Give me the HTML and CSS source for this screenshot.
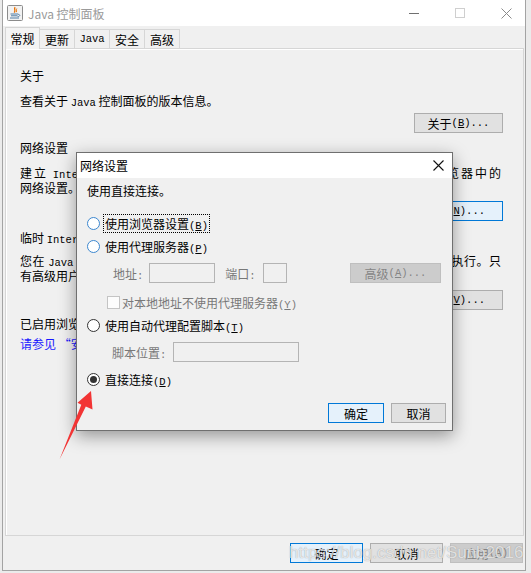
FILE: index.html
```html
<!DOCTYPE html>
<html>
<head>
<meta charset="utf-8">
<title>Java 控制面板</title>
<link rel="stylesheet" href="styles.css">
</head>
<body>
<div class="window">
  <div class="titlebar">
    <svg class="appicon" viewBox="0 0 16 16" width="16" height="16">
      <rect x="0.5" y="0.5" width="15" height="15" rx="1" fill="#f2f2f2" stroke="#8c8c8c"/>
      <path d="M8.2 2.2 C6.2 4 9.4 5 7.2 7.6" stroke="#e76f00" stroke-width="1.3" fill="none"/>
      <path d="M9.8 3.6 C8.8 5 10.3 5.6 9.2 7.2" stroke="#e76f00" stroke-width="1" fill="none"/>
      <path d="M3.5 9 H11 M4 10.8 H10.5 M3 13 H12" stroke="#4f7da6" stroke-width="1" fill="none"/>
      <path d="M11 9.3 C13.4 9.3 13.4 11.6 10.6 11.6" stroke="#4f7da6" stroke-width="1" fill="none"/>
    </svg>
    <span class="title">Java 控制面板</span>
    <div class="winctl">
      <span class="ctl"><span class="min"></span></span>
      <span class="ctl"><span class="max"></span></span>
      <span class="ctl">
        <svg width="11" height="11" viewBox="0 0 11 11"><path d="M0.5 0.5 L10.5 10.5 M10.5 0.5 L0.5 10.5" stroke="#8a8a8a" stroke-width="1"/></svg>
      </span>
    </div>
  </div>

  <div class="tabs">
    <div class="tab active">常规</div>
    <div class="tab">更新</div>
    <div class="tab"><span class="m">Java</span></div>
    <div class="tab">安全</div>
    <div class="tab">高级</div>
  </div>

  <div class="panel">
    <div class="h">关于</div>
    <div class="p gap10">查看关于 <span class="m">Java</span> 控制面板的版本信息。</div>
    <div class="btnrow gap5"><button class="btn about">关于<span class="m">(<u>B</u>)...</span></button></div>

    <div class="h gap7">网络设置</div>
    <div class="p gap10">
      <span class="jl">建立 <span class="m">Internet</span> 连接时使用网络设置。默认情况下，<span class="m">Java</span> 将使用 <span class="m">Web</span> 浏览器中的</span>
      <span class="ln">网络设置。只有高级用户才应修改这些设置。</span>
    </div>
    <div class="btnrow gap6"><button class="btn wide focus">网络设置<span class="m">(<u>N</u>)...</span></button></div>

    <div class="h gap9">临时 <span class="m">Internet</span> 文件</div>
    <div class="p gap8">
      <span class="jl">您在 <span class="m">Java</span> 应用程序中使用的文件会储存在一个特殊的文件夹中，以便以后快速执行。只</span>
      <span class="ln">有高级用户才应删除文件或修改这些设置。</span>
    </div>
    <div class="btnrow gap7">
      <button class="btn wide">设置<span class="m">(<u>S</u>)...</span></button>
      <button class="btn wide">查看<span class="m">(<u>V</u>)...</span></button>
    </div>

    <div class="p gap6">已启用浏览器中的 <span class="m">Java</span> 内容。</div>
    <div class="p link gap5">请参见 “安全” 选项卡</div>
  </div>

  <div class="footer">
    <button class="btn fbtn focus">确定</button>
    <button class="btn fbtn">取消</button>
    <button class="btn fbtn disabled">应用<span class="m">(<u>A</u>)</span></button>
  </div>
</div>

<div class="dialog">
  <div class="dlg-title">
    <span>网络设置</span>
    <span class="dlg-close">
      <svg width="11" height="11" viewBox="0 0 11 11"><path d="M0.5 0.5 L10.5 10.5 M10.5 0.5 L0.5 10.5" stroke="#111" stroke-width="1.1"/></svg>
    </span>
  </div>
  <div class="dlg-body">
    <div class="status">使用直接连接。</div>

    <div class="opt r1"><span class="radio hot"></span><span class="lbl focusring">使用浏览器设置<span class="m">(<u>B</u>)</span></span></div>
    <div class="opt r2"><span class="radio hot"></span><span class="lbl">使用代理服务器<span class="m">(<u>P</u>)</span></span></div>

    <div class="addr">
      <span class="dis">地址<span class="m">:</span></span>
      <span class="input addr-in"></span>
      <span class="dis port-l">端口<span class="m">:</span></span>
      <span class="input port-in"></span>
      <button class="btn adv disabled">高级<span class="m">(<u>A</u>)...</span></button>
    </div>

    <div class="chk"><span class="box"></span><span class="dis">对本地地址不使用代理服务器<span class="m">(<u>Y</u>)</span></span></div>

    <div class="opt r3"><span class="radio"></span><span class="lbl">使用自动代理配置脚本<span class="m">(<u>T</u>)</span></span></div>

    <div class="script">
      <span class="dis">脚本位置<span class="m">:</span></span>
      <span class="input script-in"></span>
    </div>

    <div class="opt r4"><span class="radio on"></span><span class="lbl">直接连接<span class="m">(<u>D</u>)</span></span></div>

    <div class="dlg-btns">
      <button class="btn ok focus">确定</button>
      <button class="btn cancel">取消</button>
    </div>
  </div>
</div>

<svg class="arrow" width="45" height="80" viewBox="0 0 45 80">
  <polygon points="36,6 37.5,24.5 30.8,21.5 4.5,74.5 26.3,19.8 22.5,17.7" fill="#f23434"/>
</svg>

<div class="watermark">https://blog.csdn.net/Sunb2016</div>
</body>
</html>
```

FILE: styles.css
```css
* { box-sizing: border-box; }
html, body { margin: 0; padding: 0; }
body {
  width: 531px;
  height: 573px;
  overflow: hidden;
  position: relative;
  background: #ebebeb;
  font-family: "Noto Sans CJK SC", "Liberation Sans", sans-serif;
  font-size: 12px;
  line-height: 15px;
  color: #000;
}
.m { font-family: "Liberation Mono", monospace; font-size: 10.5px; line-height: 10px; }
u { text-decoration: underline; text-underline-offset: 1px; }

.window {
  margin-left: 2px;
  width: 524px;
  height: 571px;
  background: #f0f0f0;
  border: 1px solid #a3a3a3;
  border-top: none;
  display: flex;
  flex-direction: column;
}

/* title bar */
.titlebar {
  height: 26px;
  flex-shrink: 0;
  background: #fff;
  display: flex;
  align-items: center;
  padding-left: 4px;
}
.appicon { display: block; }
.title { margin-left: 5px; color: #9a9a9a; font-size: 12px; }
.winctl { margin-left: auto; margin-right: -4px; display: flex; height: 26px; }
.ctl { width: 46px; display: flex; align-items: center; justify-content: center; }
.min { width: 10px; height: 1px; background: #707070; }
.max { width: 10px; height: 10px; border: 1px solid #cfcfcf; }

/* tabs */
.tabs {
  height: 22px;
  flex-shrink: 0;
  display: flex;
  align-items: flex-end;
  padding-left: 2px;
}
.tab {
  width: 35px;
  height: 19px;
  border: 1px solid #d6d6d6;
  border-left: none;
  border-bottom: none;
  display: flex;
  align-items: center;
  justify-content: center;
  background: #f0f0f0;
}
.tab.active {
  height: 22px;
  margin-bottom: -1px;
  border-left: 1px solid #d6d6d6;
  position: relative;
  z-index: 1;
  background: #f4f4f4;
}

/* main panel */
.panel {
  height: 488px;
  flex-shrink: 0;
  margin: 0 1px 0 2px;
  border: 1px solid #d6d6d6;
  box-shadow: inset 1px 1px 0 #fff;
  padding: 19px 19px 0 14px;
}
.h, .p { line-height: 15px; }
.p .jl { display: block; height: 15px; text-align: justify; text-align-last: justify; width: 481px; }
.p .ln { display: block; height: 15px; }
.h, .p.gap10, .p.gap6, .p.gap5 { min-height: 15px; }
.link { color: #1a1aff; }
.gap5 { margin-top: 5px; }
.gap6 { margin-top: 6px; }
.gap7 { margin-top: 7px; }
.gap8 { margin-top: 8px; }
.gap9 { margin-top: 9px; }
.gap10 { margin-top: 10px; }

.btnrow { display: flex; justify-content: flex-end; gap: 7px; padding-right: 1px; }

.btn {
  height: 20px;
  border: 1px solid #adadad;
  background: #e1e1e1;
  font: inherit;
  line-height: 15px;
  color: #000;
  padding: 0;
  margin: 0;
  display: flex;
  align-items: center;
  justify-content: center;
  white-space: nowrap;
}
.btn.focus { border-color: #0078d7; background: #e5f1fb; }
.btn.disabled { border-color: #bfbfbf; background: #cccccc; color: #858585; }
.btn.about { width: 89px; }
.btn.wide { padding: 0 17px; }

/* footer */
.footer {
  flex: 1;
  display: flex;
  justify-content: flex-end;
  align-items: flex-start;
  gap: 7px;
  padding: 7px 2px 0 0;
}
.fbtn { width: 73px; }

/* dialog */
.dialog {
  position: absolute;
  left: 76px;
  top: 152px;
  width: 377px;
  height: 279px;
  border: 1px solid #6f6f6f;
  background: #f0f0f0;
  box-shadow: 0 5px 16px rgba(0, 0, 0, 0.38);
  display: flex;
  flex-direction: column;
}
.dlg-title {
  height: 25px;
  flex-shrink: 0;
  background: #fff;
  display: flex;
  align-items: center;
  padding-left: 3px;
}
.dlg-close { margin-left: auto; width: 28px; display: flex; justify-content: center; align-items: center; }
.dlg-body { flex: 1; padding: 5px 6px 0 10px; }
.status { line-height: 15px; }

.opt { display: flex; align-items: center; height: 20px; }
.r1 { margin-top: 15px; }
.r2 { margin-top: 3px; }
.r3 { margin-top: 5px; }
.r4 { margin-top: 7px; }
.radio {
  width: 13px;
  height: 13px;
  flex-shrink: 0;
  border-radius: 50%;
  border: 1px solid #333;
  background: #fff;
  margin-right: 3px;
  display: flex;
  align-items: center;
  justify-content: center;
}
.radio.hot { border-color: #3c87cf; }
.radio.on::after { content: ""; width: 7px; height: 7px; border-radius: 50%; background: #333; }
.lbl { padding: 1px; border: 1px dotted transparent; }
.focusring { border-color: #000; }

.dis { color: #787878; }
.input { display: block; height: 20px; border: 1px solid #b4b4b4; background: #f0f0f0; }

.addr { display: flex; align-items: center; margin-top: 7px; padding-left: 26px; padding-right: 5px; height: 20px; }
.addr-in { width: 66px; margin-left: 6px; }
.port-l { margin-left: 10px; }
.port-in { width: 24px; margin-left: 7px; }
.btn.adv { width: 91px; margin-left: auto; }

.chk { display: flex; align-items: center; margin-top: 11px; padding-left: 20px; height: 16px; }
.box { width: 13px; height: 13px; border: 1px solid #c4c4c4; background: #fcfcfc; margin-right: 2px; }

.script { display: flex; align-items: center; margin-top: 7px; padding-left: 25px; height: 20px; }
.script-in { width: 126px; margin-left: 7px; }

.dlg-btns { display: flex; justify-content: flex-end; gap: 7px; margin-top: 14px; }
.btn.ok { width: 56px; }
.btn.cancel { width: 55px; }

/* annotation arrow */
.arrow { position: absolute; left: 55px; top: 385px; }

/* watermark */
.watermark {
  position: absolute;
  left: 289px;
  top: 543px;
  font-family: "Liberation Sans", sans-serif;
  font-size: 17px;
  line-height: 20px;
  color: rgba(255, 255, 255, 0.72);
  text-shadow: 0 0 1px rgba(90, 90, 90, 0.6);
  white-space: nowrap;
}
```
